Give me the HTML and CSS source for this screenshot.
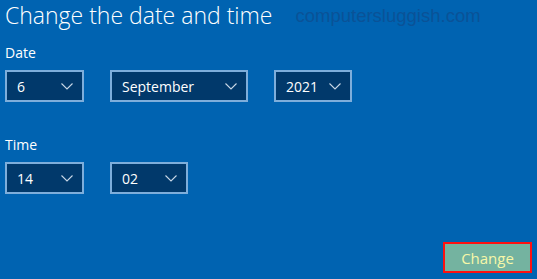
FILE: index.html
```html
<!DOCTYPE html>
<html>
<head>
<meta charset="utf-8">
<link rel="stylesheet" href="styles.css">
</head>
<body>
<div class="page">
  <div class="header">
    <h1 class="title">Change the date and time</h1>
    <span class="watermark">computersluggish.com</span>
  </div>
  <div class="label label-date">Date</div>
  <div class="row">
    <div class="select w-day"><span>6</span><svg class="chev" viewBox="0 0 12 7"><path d="M0.5 0.5 L6 6 L11.5 0.5" /></svg></div>
    <div class="select w-month"><span>September</span><svg class="chev" viewBox="0 0 12 7"><path d="M0.5 0.5 L6 6 L11.5 0.5" /></svg></div>
    <div class="select w-year"><span>2021</span><svg class="chev" viewBox="0 0 12 7"><path d="M0.5 0.5 L6 6 L11.5 0.5" /></svg></div>
  </div>
  <div class="label label-time">Time</div>
  <div class="row">
    <div class="select w-day"><span>14</span><svg class="chev" viewBox="0 0 12 7"><path d="M0.5 0.5 L6 6 L11.5 0.5" /></svg></div>
    <div class="select w-min"><span>02</span><svg class="chev" viewBox="0 0 12 7"><path d="M0.5 0.5 L6 6 L11.5 0.5" /></svg></div>
  </div>
  <div class="footer">
    <button class="btn">Change</button>
  </div>
</div>
</body>
</html>
```
FILE: styles.css
```css
html, body {
  margin: 0;
  padding: 0;
  height: 100%;
  background: #0063b1;
}
body {
  font-family: "Open Sans", "Noto Sans", sans-serif;
  color: #ffffff;
}
.page {
  display: flex;
  flex-direction: column;
  height: 279px;
  padding-left: 5px;
  box-sizing: border-box;
}
.header {
  display: flex;
  align-items: flex-start;
  height: 30px;
}
.title {
  margin: 0;
  padding-top: 1px;
  font-weight: 300;
  font-size: 23px;
  line-height: 28px;
}
.watermark {
  margin-left: 23px;
  padding-top: 5px;
  font-family: "Liberation Sans", Arial, sans-serif;
  font-size: 18.5px;
  line-height: 22px;
  color: #0a5297;
}
.label {
  font-size: 14px;
  line-height: 20px;
}
.label-date { margin-top: 13px; }
.label-time { margin-top: 33px; }
.row {
  display: flex;
  gap: 26px;
  margin-top: 7px;
}
.select {
  box-sizing: border-box;
  height: 32px;
  border: 2px solid #7eaedb;
  background: #01396b;
  display: flex;
  align-items: center;
  justify-content: space-between;
  padding: 0 9px 0 10px;
  font-size: 14px;
}
.w-day { width: 79px; }
.w-month { width: 138px; }
.w-year { width: 78px; }
.w-min { width: 78px; }
.chev {
  width: 12px;
  height: 7px;
  fill: none;
  stroke: #c9d7e6;
  stroke-width: 1.1;
}
.footer {
  margin-top: auto;
  display: flex;
  justify-content: flex-end;
  padding: 0 5px 6px 0;
}
.btn {
  box-sizing: border-box;
  width: 89px;
  height: 31px;
  border: 2px solid #ff1010;
  background: #74b3a0;
  color: #f7f7a8;
  font-family: "Open Sans", "Noto Sans", sans-serif;
  font-size: 15px;
  padding: 0;
}
```
